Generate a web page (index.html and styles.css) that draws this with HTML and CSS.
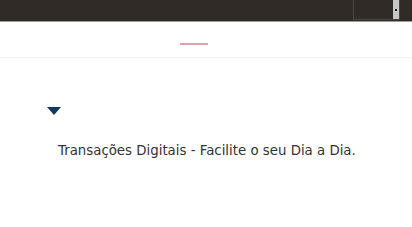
FILE: index.html
```html
<!DOCTYPE html>
<html lang="pt">
<head>
    <meta charset="UTF-8">
    <meta name="viewport" content="width=device-width, initial-scale=1.0">
    <title>Transações Digitais</title>
    <link rel="stylesheet" href="styles.css">
</head>
<body>
    <div class="topbar">
        <div class="lang-select">
            <div class="lang-box"></div>
            <div class="lang-scroll"><span class="lang-thumb"></span></div>
        </div>
    </div>
    <div class="header">
        <span class="header-line"></span>
    </div>
    <div class="content">
        <div class="arrow"></div>
        <p class="tagline">Transações Digitais - Facilite o seu Dia a Dia.</p>
    </div>
</body>
</html>
```

FILE: styles.css
```css
body {
    margin: 0;
    padding: 0;
    font-family: 'DejaVu Sans', sans-serif;
    background: #fff;
    color: #333;
}
.topbar {
    height: 21px;
    background-color: #302b27;
    border-bottom: 1px solid #a09c98;
    display: flex;
    justify-content: flex-end;
    padding-right: 12px;
}
.lang-select {
    display: flex;
    width: 47px;
    height: 20px;
    border: 1px solid #4a4541;
    border-top: none;
    box-sizing: border-box;
}
.lang-box {
    flex: 1;
}
.lang-scroll {
    width: 6px;
    background: #c9c7c5;
    display: flex;
    align-items: center;
    justify-content: center;
}
.lang-thumb {
    width: 2px;
    height: 2px;
    background: #222;
}
.header {
    height: 35px;
    border-bottom: 1px solid #f0f0f0;
    display: flex;
    justify-content: center;
    padding-right: 24px;
}
.header-line {
    width: 28px;
    height: 2px;
    margin-top: 21px;
    background: #dca3a8;
}
.content {
    padding: 49px 0 0 47px;
}
.arrow {
    width: 0;
    height: 0;
    border-left: 7px solid transparent;
    border-right: 7px solid transparent;
    border-top: 8px solid #0f3a5f;
}
.tagline {
    margin: 28px 0 0 11px;
    font-size: 10pt;
    color: #333;
}
```
